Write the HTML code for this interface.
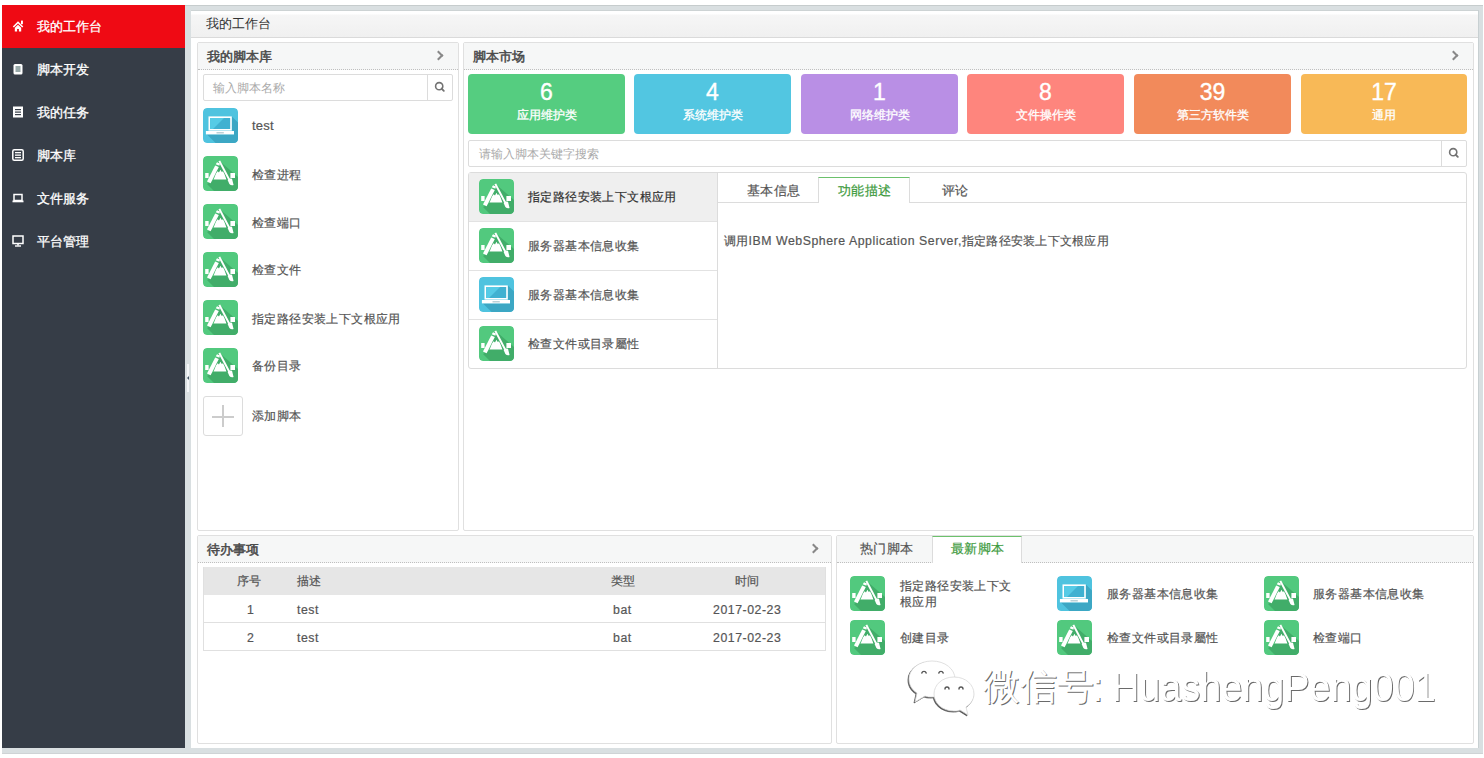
<!DOCTYPE html>
<html><head><meta charset="utf-8">
<style>
*{box-sizing:border-box;margin:0;padding:0}
html,body{width:1484px;height:758px;overflow:hidden;background:#fff;font-family:"Liberation Sans",sans-serif;color:#555;font-size:12px}
.a{position:absolute}
#frame{left:2px;top:5px;width:1481px;height:749px;background:#d9dfe1;border-top:1px solid #c6cccd;border-bottom:1px solid #cfd3d5}
#side{left:2px;top:5px;width:183px;height:743px;background:#363d47}
.mi{position:absolute;left:0;width:183px;height:43px;color:#fff;font-size:13.3px;line-height:43px;-webkit-text-stroke:0.3px #fff}
.mi .t{position:absolute;left:35px;top:0}
.mi svg{position:absolute;left:10px;top:15px}
#act{background:#ef0a14}
#main{left:191px;top:10px;width:1287px;height:738px;background:#fff;border-top:1px solid #cdd3d4}
#hdr{left:191px;top:11px;width:1287px;height:26.5px;background:linear-gradient(#fff 0,#fff 12%,#f6f6f6 15%,#f0f0f0);border-bottom:1px solid #dadada;color:#333;font-size:13.3px;line-height:26px;padding-left:15px}
.pn{position:absolute;border:1px solid #e0e0e0;border-radius:2px;background:#fff}
.ph{position:absolute;left:0;top:0;right:0;height:26.5px;background:#f6f7f7;border-bottom:1px dotted #bfbfbf;color:#4a4a4a;font-size:13.3px;line-height:27px;padding-left:9px;-webkit-text-stroke:0.5px currentColor}
.chev{position:absolute;top:9px;width:7px;height:7px;border-right:2px solid #888;border-top:2px solid #888;transform:rotate(45deg)}
.ico{position:absolute;width:35px;height:35px;border-radius:4px;overflow:hidden}
.li{position:absolute;font-size:12.3px;color:#555;letter-spacing:0.4px;margin-top:1px;-webkit-text-stroke:0.2px currentColor}
.tile{position:absolute;top:74px;height:60px;border-radius:4px;color:#fff;text-align:center}
.tile .n{position:absolute;left:0;right:0;top:4px;font-size:23px;line-height:28px;-webkit-text-stroke:0.35px #fff}
.tile .l{position:absolute;left:0;right:0;top:32px;font-size:12.3px;line-height:18px;font-weight:500;-webkit-text-stroke:0.3px #fff}
.sbox{border:1px solid #dcdcdc;border-radius:2px;background:#fff}
.ph2{position:absolute;top:5px;color:#aaa;font-size:12px;line-height:16px}
.sbtn{position:absolute;top:0;width:26px;height:25px;border-left:1px solid #dcdcdc}
.sbtn svg{position:absolute;left:6px;top:6px}
.li{line-height:16px}
.td{position:absolute;font-size:12.3px;line-height:16px;color:#555;-webkit-text-stroke:0.2px currentColor}
.wm{color:#fff;font-weight:normal;white-space:nowrap;line-height:50px;text-shadow:1px 1px 0.6px #6a6a6a}
.lt{letter-spacing:0.55px}
</style></head><body>
<svg width="0" height="0" style="position:absolute">
<defs>
<symbol id="ia" viewBox="0 0 35 35">
 <rect width="35" height="35" rx="4" fill="#52c97e"/>
 <path d="M16 4.5 L35 21 L35 31 Q35 35 31 35 L11 35 L4 28 L10.5 23.8 Z" fill="#41ad69"/>
 <path d="M12.2 9.4 L15.8 11 L7.6 27.2 L4 25.6 Z" fill="#fff"/>
 <path d="M12.8 8.2 L14 6.2 L17 7.6 L16.4 9.8 Z" fill="#fff"/>
 <path d="M15.4 5.2 L17.2 4.4 L27.4 23.8 L25.6 24.6 Z" fill="#fff"/>
 <path d="M24.6 24 Q26.8 22 29 22.8 L30.6 29 Q28 29.8 26.4 28 Z" fill="#fff"/>
 <path d="M10.6 23.4 L13 17.6 L14.6 15.2 L16 16.4 L17.4 13.8 L18.8 16 L20 15.2 L21.6 18.4 L23.4 23.4 Z" fill="#fff"/>
 <rect x="2.2" y="17" width="3.4" height="5" fill="#fff"/>
 <rect x="27.4" y="17" width="4.6" height="5" fill="#fff"/>
</symbol>
<symbol id="il" viewBox="0 0 35 35">
 <rect width="35" height="35" rx="4" fill="#4fc3df"/>
 <path d="M28.8 8.4 L35 14.6 L35 31 Q35 35 31 35 L12.6 35 L4 26.4 L31 26.4 L31 23 L28.8 22.6 Z" fill="#3ca7c4"/>
 <rect x="6.3" y="9.2" width="21.7" height="12.6" fill="#40b1d1" stroke="#fff" stroke-width="1.6"/>
 <path d="M7.1 10 L21 10 L10 21 L7.1 21 Z" fill="#56cbe6"/>
 <rect x="2.9" y="23" width="28.1" height="3.4" fill="#fff"/>
 <rect x="13.5" y="24.4" width="7.3" height="0.9" fill="#8fb3bd"/>
</symbol>
</defs></svg>

<div class="a" id="frame"></div>
<div class="a" id="side">
  <div class="mi" id="act" style="top:0"><svg width="12" height="12" viewBox="0 0 12 12"><path d="M0.8 6.6 L6 1.3 L11.3 6.6 L10.2 7.6 L6 3.5 L1.9 7.6 Z" fill="#fff"/><rect x="9" y="0.6" width="1.9" height="3.6" fill="#fff"/><path d="M2.8 7.8 L6 4.7 L9.2 7.8 L9.2 11.4 L6.9 11.4 L6.9 8.9 L5.1 8.9 L5.1 11.4 L2.8 11.4 Z" fill="#fff"/></svg><span class="t">我的工作台</span></div>
  <div class="mi" style="top:43px"><svg width="12" height="12" viewBox="0 0 12 12"><rect x="1.5" y="1" width="9" height="10.5" rx="1.5" fill="#fff"/><rect x="3.5" y="3" width="5" height="6" fill="#9aa"/></svg><span class="t">脚本开发</span></div>
  <div class="mi" style="top:86px"><svg width="12" height="12" viewBox="0 0 12 12"><rect x="1" y="0.5" width="10" height="11" fill="#fff"/><rect x="3" y="3" width="6" height="1.2" fill="#363d47"/><rect x="3" y="5.5" width="6" height="1.2" fill="#363d47"/><rect x="3" y="8" width="6" height="1.2" fill="#363d47"/></svg><span class="t">我的任务</span></div>
  <div class="mi" style="top:129px"><svg width="12" height="12" viewBox="0 0 12 12"><rect x="0.8" y="0.8" width="10.4" height="10.4" rx="1.5" fill="none" stroke="#fff" stroke-width="1.5"/><rect x="3" y="3" width="6" height="1.3" fill="#fff"/><rect x="3" y="5.5" width="6" height="1.3" fill="#fff"/><rect x="3" y="8" width="6" height="1.3" fill="#fff"/></svg><span class="t">脚本库</span></div>
  <div class="mi" style="top:172px"><svg width="12" height="12" viewBox="0 0 12 12"><rect x="2" y="2.5" width="8" height="6" fill="none" stroke="#fff" stroke-width="1.5"/><rect x="0.5" y="8.5" width="11" height="1.8" fill="#fff"/></svg><span class="t">文件服务</span></div>
  <div class="mi" style="top:215px"><svg width="12" height="12" viewBox="0 0 12 12"><rect x="1" y="1" width="10" height="7.5" fill="none" stroke="#fff" stroke-width="1.5"/><rect x="5.2" y="8.5" width="1.6" height="2" fill="#fff"/><rect x="3" y="10.3" width="6" height="1.4" fill="#fff"/></svg><span class="t">平台管理</span></div>
</div>
<div class="a" id="main"></div>
<div class="a" style="left:1478px;top:10px;width:1px;height:738px;background:#c8d0d2"></div>
<div class="a" style="left:187px;top:364px;width:2px;height:28px;background:#f4f6f8"></div><div class="a" style="left:187px;top:376px;width:0;height:0;border-top:2px solid transparent;border-bottom:2px solid transparent;border-right:2px solid #456"></div>
<div class="a" id="hdr">我的工作台</div>

<!-- panel 1 -->
<div class="pn" style="left:197px;top:42px;width:262px;height:489px">
  <div class="ph">我的脚本库<span class="chev" style="right:16px"></span></div>
</div>
<div class="a sbox" style="left:203px;top:74px;width:250px;height:27px"><span class="ph2" style="left:9px">输入脚本名称</span><span class="sbtn" style="left:223px"><svg width="12" height="12" viewBox="0 0 12 12"><circle cx="5.2" cy="5.2" r="3.6" fill="none" stroke="#737373" stroke-width="1.6"/><path d="M7.6 7.6 L9.8 9.8" stroke="#737373" stroke-width="1.9" stroke-linecap="round"/></svg></span></div>
<svg class="ico" style="left:203px;top:108px"><use href="#il"/></svg><span class="li" style="left:252px;top:117px;font-size:13px;letter-spacing:0.2px">test</span>
<svg class="ico" style="left:203px;top:156px"><use href="#ia"/></svg><span class="li" style="left:252px;top:166px">检查进程</span>
<svg class="ico" style="left:203px;top:204px"><use href="#ia"/></svg><span class="li" style="left:252px;top:214px">检查端口</span>
<svg class="ico" style="left:203px;top:252px"><use href="#ia"/></svg><span class="li" style="left:252px;top:261px">检查文件</span>
<svg class="ico" style="left:203px;top:300px"><use href="#ia"/></svg><span class="li" style="left:252px;top:310px">指定路径安装上下文根应用</span>
<svg class="ico" style="left:203px;top:348px"><use href="#ia"/></svg><span class="li" style="left:252px;top:357px">备份目录</span>
<div class="a" style="left:203px;top:396px;width:40px;height:40px;border:1px solid #dcdcdc;border-radius:3px"><div class="a" style="left:8px;top:18.5px;width:22px;height:2px;background:#ccc"></div><div class="a" style="left:18px;top:8px;width:2px;height:22px;background:#ccc"></div></div>
<span class="li" style="left:252px;top:407px">添加脚本</span>
<!-- panel 2 -->
<div class="pn" style="left:463px;top:42px;width:1011px;height:489px">
  <div class="ph">脚本市场<span class="chev" style="right:16px"></span></div>
</div>
<div class="tile" style="left:468px;width:157px;background:#55cd80"><div class="n">6</div><div class="l">应用维护类</div></div>
<div class="tile" style="left:634px;width:157px;background:#52c6e1"><div class="n">4</div><div class="l">系统维护类</div></div>
<div class="tile" style="left:801px;width:157px;background:#b98fe5"><div class="n">1</div><div class="l">网络维护类</div></div>
<div class="tile" style="left:967px;width:157px;background:#fe857d"><div class="n">8</div><div class="l">文件操作类</div></div>
<div class="tile" style="left:1134px;width:157px;background:#f28a5b"><div class="n">39</div><div class="l">第三方软件类</div></div>
<div class="tile" style="left:1301px;width:166px;background:#f8b957"><div class="n">17</div><div class="l">通用</div></div>
<div class="a sbox" style="left:468px;top:140px;width:999px;height:27px"><span class="ph2" style="left:10px">请输入脚本关键字搜索</span><span class="sbtn" style="left:972px"><svg width="12" height="12" viewBox="0 0 12 12"><circle cx="5.2" cy="5.2" r="3.6" fill="none" stroke="#737373" stroke-width="1.6"/><path d="M7.6 7.6 L9.8 9.8" stroke="#737373" stroke-width="1.9" stroke-linecap="round"/></svg></span></div>
<div class="a" style="left:468px;top:172px;width:999px;height:197px;border:1px solid #dcdcdc;border-radius:3px"></div>
<div class="a" style="left:469px;top:173px;width:249px;height:48px;background:#efefef"></div>
<div class="a" style="left:469px;top:221px;width:249px;height:1px;background:#e2e2e2"></div>
<div class="a" style="left:469px;top:270px;width:249px;height:1px;background:#e2e2e2"></div>
<div class="a" style="left:469px;top:319px;width:249px;height:1px;background:#e2e2e2"></div>
<div class="a" style="left:717px;top:173px;width:1px;height:195px;background:#dcdcdc"></div>
<svg class="ico" style="left:479px;top:179px"><use href="#ia"/></svg><span class="li" style="left:528px;top:188px;color:#333">指定路径安装上下文根应用</span>
<svg class="ico" style="left:479px;top:228px"><use href="#ia"/></svg><span class="li" style="left:528px;top:237px">服务器基本信息收集</span>
<svg class="ico" style="left:479px;top:277px"><use href="#il"/></svg><span class="li" style="left:528px;top:286px">服务器基本信息收集</span>
<svg class="ico" style="left:479px;top:326px"><use href="#ia"/></svg><span class="li" style="left:528px;top:335px">检查文件或目录屬性</span>
<div class="a" style="left:718px;top:202px;width:749px;height:1px;background:#dcdcdc"></div>
<div class="a" style="left:818px;top:177px;width:92px;height:26px;background:#fff;border:1px solid #dcdcdc;border-bottom:none;border-top:1px solid #6cc16c"></div>
<span class="li" style="left:747px;top:182px;color:#555;font-size:13px">基本信息</span>
<span class="li" style="left:838px;top:182px;color:#3c9a3c;font-size:13px">功能描述</span>
<span class="li" style="left:942px;top:182px;color:#555;font-size:13px">评论</span>
<span class="li" style="left:724px;top:233px;margin-top:0;letter-spacing:0.25px">调用<span class="lt">IBM WebSphere Application Server,</span>指定路径安装上下文根应用</span>
<!-- panel 3 -->
<div class="pn" style="left:197px;top:535px;width:635px;height:209px">
  <div class="ph">待办事项<span class="chev" style="right:14px"></span></div>
</div>
<div class="a" style="left:203px;top:567px;width:623px;height:84px;border:1px solid #e0e0e0"></div>
<div class="a" style="left:204px;top:567px;width:621px;height:28px;background:#e6e6e6"></div>
<div class="a" style="left:204px;top:622px;width:621px;height:1px;background:#e0e0e0"></div>
<span class="td" style="left:237px;top:573px">序号</span><span class="td" style="left:297px;top:573px">描述</span><span class="td" style="left:611px;top:573px">类型</span><span class="td" style="left:735px;top:573px">时间</span>
<span class="td" style="left:247px;top:602px">1</span><span class="td lt" style="left:297px;top:602px">test</span><span class="td lt" style="left:613px;top:602px">bat</span><span class="td lt" style="left:713px;top:602px">2017-02-23</span>
<span class="td" style="left:247px;top:630px">2</span><span class="td lt" style="left:297px;top:630px">test</span><span class="td lt" style="left:613px;top:630px">bat</span><span class="td lt" style="left:713px;top:630px">2017-02-23</span>
<!-- panel 4 -->
<div class="pn" style="left:836px;top:535px;width:638px;height:209px">
  <div class="ph" style="font-weight:normal"></div>
</div>
<div class="a" style="left:932px;top:536px;width:90px;height:27px;background:#fff;border-left:1px solid #dcdcdc;border-right:1px solid #dcdcdc;border-top:1px solid #6cc16c"></div>
<span class="li" style="left:860px;top:540px;font-size:13px;color:#555">热门脚本</span>
<span class="li" style="left:951px;top:540px;font-size:13px;color:#3c9a3c">最新脚本</span>
<svg class="ico" style="left:850px;top:576px"><use href="#ia"/></svg><span class="li" style="left:900px;top:577px;line-height:16px">指定路径安装上下文<br>根应用</span>
<svg class="ico" style="left:1057px;top:576px"><use href="#il"/></svg><span class="li" style="left:1107px;top:585px">服务器基本信息收集</span>
<svg class="ico" style="left:1264px;top:576px"><use href="#ia"/></svg><span class="li" style="left:1313px;top:585px">服务器基本信息收集</span>
<svg class="ico" style="left:850px;top:620px"><use href="#ia"/></svg><span class="li" style="left:900px;top:629px">创建目录</span>
<svg class="ico" style="left:1057px;top:620px"><use href="#ia"/></svg><span class="li" style="left:1107px;top:629px">检查文件或目录屬性</span>
<svg class="ico" style="left:1264px;top:620px"><use href="#ia"/></svg><span class="li" style="left:1313px;top:629px">检查端口</span>
<svg class="a" style="left:900px;top:655px;filter:drop-shadow(-0.5px 1px 0.5px #555)" width="80" height="65" viewBox="0 0 80 65">
 <g fill="#fff" stroke="#d8d8d8" stroke-width="0.8">
  <path d="M32 6 C19 6 9 14 9 24 C9 30 12 35 17 38 L15 47 L25 41 C27 42 30 42 32 42 C45 42 55 34 55 24 C55 14 45 6 32 6 Z"/>
  <path d="M54 22 C42 22 34 30 34 39 C34 48 42 56 54 56 C56 56 58 56 60 55 L68 60 L66 52 C71 49 74 44 74 39 C74 30 66 22 54 22 Z"/>
 </g>
 <g fill="none" stroke="#555" stroke-width="1.4" stroke-linecap="round"><path d="M21.8 18 A2.3 2.3 0 0 1 26.2 18"/><path d="M38.8 18 A2.3 2.3 0 0 1 43.2 18"/><path d="M45 34 A2 2 0 0 1 49 34"/><path d="M59 34 A2 2 0 0 1 63 34"/></g>
</svg>
<div class="a wm" style="left:983px;top:662px;font-size:37px">微信号</div>
<div class="a wm" style="left:1092px;top:662px;font-size:40px">:</div>
<div class="a wm" style="left:1111.5px;top:662px;font-size:40px;transform:scaleX(0.945);transform-origin:0 0">HuashengPeng001</div>

</body></html>
